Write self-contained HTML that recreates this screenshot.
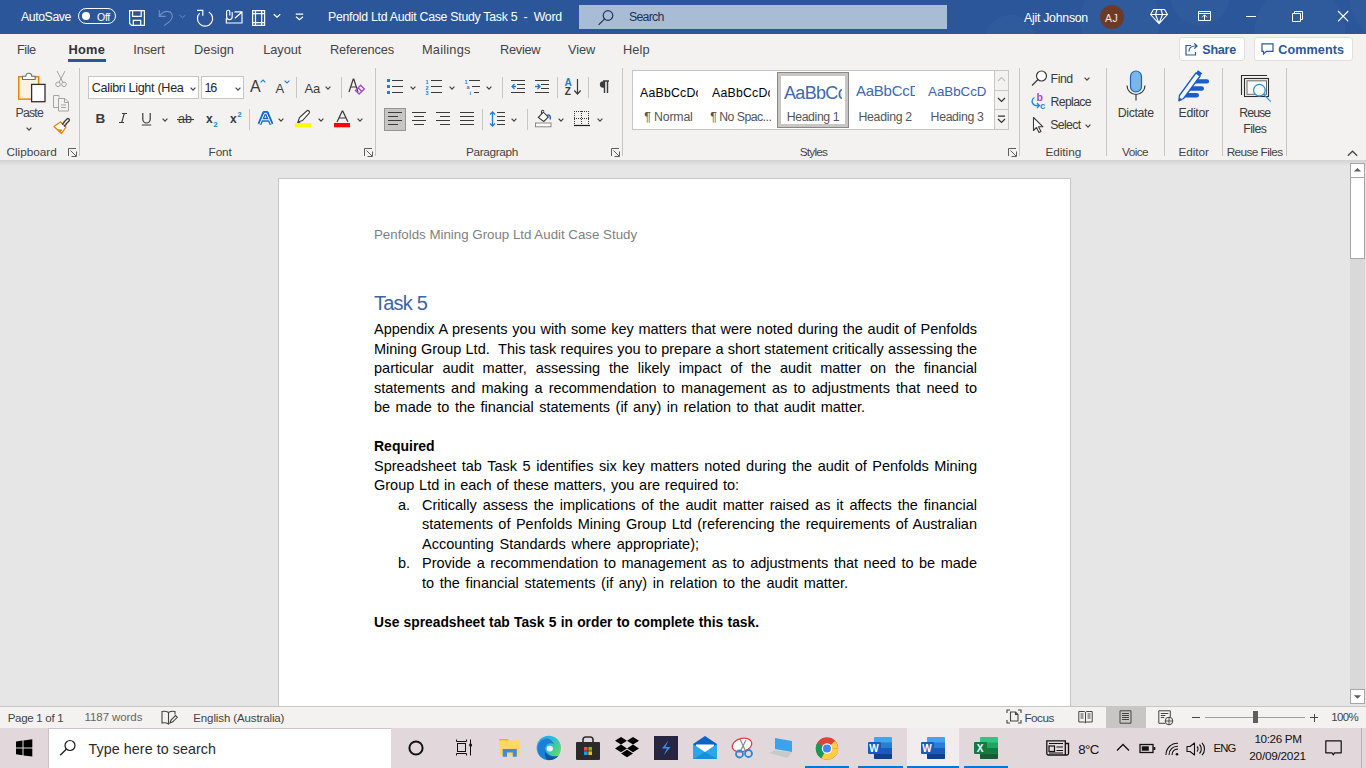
<!DOCTYPE html>
<html><head><meta charset="utf-8">
<style>
*{margin:0;padding:0;box-sizing:border-box}
html,body{width:1366px;height:768px;overflow:hidden;background:#e6e6e6;font-family:"Liberation Sans",sans-serif;position:relative}
.a{position:absolute}
.t{position:absolute;white-space:nowrap}
.ln{position:absolute;height:20px;line-height:20px;font-size:14.5px;color:#000;text-align:justify;white-space:normal}
svg{overflow:visible}
</style></head><body>
<div class="a" style="left:0px;top:0px;width:1366px;height:34px;background:#2b579a;overflow:hidden"></div>
<div class="a" style="left:1080px;top:-20px;width:80px;height:80px;border-radius:50%;background:rgba(255,255,255,0.022);clip-path:inset(20px 0 26px 0)"></div>
<div class="a" style="left:1170px;top:-35px;width:60px;height:60px;border-radius:50%;background:rgba(255,255,255,0.022);clip-path:inset(35px 0 0px 0)"></div>
<div class="a" style="left:1255px;top:-15px;width:90px;height:90px;border-radius:50%;background:rgba(255,255,255,0.022);clip-path:inset(15px 0 41px 0)"></div>
<div class="a" style="left:1350px;top:-40px;width:80px;height:80px;border-radius:50%;background:rgba(255,255,255,0.022);clip-path:inset(40px 0 6px 0)"></div>
<div class="a" style="left:985px;top:15px;width:50px;height:50px;border-radius:50%;background:rgba(255,255,255,0.022);clip-path:inset(0px 0 31px 0)"></div>
<div class="a" style="left:0px;top:34px;width:1366px;height:30px;background:#f3f2f1"></div>
<div class="a" style="left:0px;top:64px;width:1366px;height:96px;background:#f3f2f1"></div>
<div class="a" style="left:0px;top:160px;width:1366px;height:6px;background:linear-gradient(#d2d2d2,#e6e6e6)"></div>
<div class="t" style="left:21.00px;top:11.29px;font-size:12.30px;line-height:12.30px;color:#ffffff;letter-spacing:-0.420px">AutoSave</div>
<div class="a" style="left:78px;top:8px;width:38px;height:16px;border:1.3px solid #fff;border-radius:8px"></div>
<div class="a" style="left:82px;top:12px;width:8px;height:8px;border-radius:50%;background:#fff"></div>
<div class="t" style="left:97.00px;top:11.51px;font-size:10.50px;line-height:10.50px;color:#ffffff;letter-spacing:-0.276px">Off</div>
<svg class="a" style="left:129px;top:10px" width="16" height="16" viewBox="0 0 16 16"><path d="M.6 .6H15.4V15.4H2.6L.6 13.4Z M3.6 .6V6.3H12.2V.6 M4.3 15.4V10.3H11.7V15.4" fill="none" stroke="#fff" stroke-width="1.2"/></svg>
<svg class="a" style="left:158px;top:9px" width="17" height="18" viewBox="0 0 17 18"><path d="M1.3 1.1V7.4H7.8 M1.8 6.9C5 1.5 12 .8 14 5.5 15.3 8.5 12.5 12.5 6 16.6" fill="none" stroke="#6f90c2" stroke-width="1.1"/></svg>
<svg class="a" style="left:179px;top:14px" width="7" height="5" viewBox="0 0 7 5"><path d="M.7 1.2l2.8 2.5 2.8-2.5" fill="none" stroke="#6f90c2" stroke-width="1"/></svg>
<svg class="a" style="left:195px;top:9px" width="19" height="18" viewBox="0 0 19 18"><path d="M13.8 2.9A7.6 7.6 0 1 1 4.6 4.2 M2 1.4H7.8V6.7" fill="none" stroke="#fff" stroke-width="1.2"/></svg>
<svg class="a" style="left:225px;top:9px" width="18" height="15" viewBox="0 0 18 15"><path d="M1.3 9.5V14H17V2.9H9.5 M9.8 9.3 16.5 3.5 M4.8 6.5V2.8a1.6 1.6 0 0 0-3.2 0V7.8a2.8 2.8 0 0 0 5.6 0V3" fill="none" stroke="#fff" stroke-width="1.15"/></svg>
<svg class="a" style="left:251px;top:9px" width="15" height="18" viewBox="0 0 15 18"><path d="M1.6 1.6H13.6V16.4H1.6Z M4.5 1.6V16.4 M10.7 1.6V16.4 M1.6 4.6H13.6 M1.6 13.6H13.6" fill="none" stroke="#fff" stroke-width="1.2"/></svg>
<svg class="a" style="left:273px;top:13px" width="8" height="6" viewBox="0 0 8 6"><path d="M.8 1.2l3.2 3 3.2-3" fill="none" stroke="#fff" stroke-width="1.3"/></svg>
<svg class="a" style="left:295px;top:13px" width="9" height="8" viewBox="0 0 9 8"><path d="M.8 1.2h7.4 M1 3.8l3.5 3 3.5-3" fill="none" stroke="#fff" stroke-width="1.2"/></svg>
<div class="t" style="left:328.00px;top:11.49px;font-size:12.30px;line-height:12.30px;color:#ffffff;letter-spacing:-0.269px">Penfold Ltd Audit Case Study Task 5&nbsp; -&nbsp; Word</div>
<div class="a" style="left:579px;top:5px;width:368px;height:24px;background:#a9bcd5"></div>
<svg class="a" style="left:597px;top:9px" width="18" height="17" viewBox="0 0 18 17"><circle cx="11" cy="6.5" r="4.8" fill="none" stroke="#22355e" stroke-width="1.2"/><path d="M7.6 9.9 1.6 15.9" stroke="#22355e" stroke-width="1.3"/></svg>
<div class="t" style="left:629.00px;top:11.09px;font-size:12.30px;line-height:12.30px;color:#1d3158;letter-spacing:-0.747px">Search</div>
<div class="t" style="left:1024.00px;top:11.89px;font-size:12.30px;line-height:12.30px;color:#ffffff;letter-spacing:-0.254px">Ajit Johnson</div>
<div class="a" style="left:1100px;top:5px;width:24px;height:24px;border-radius:50%;background:#6d3a28"></div>
<div class="t" style="left:1105.00px;top:12.91px;font-size:10.50px;line-height:10.50px;color:#f3e6e0;letter-spacing:0.375px">AJ</div>
<svg class="a" style="left:1148px;top:6px" width="22" height="20" viewBox="1148 6 22 20"><path d="M1153.5 9.5H1164.5L1167.5 14.5 1159 23.7 1150.5 14.5Z M1150.5 14.5H1167.5 M1157 9.5 1155.5 14.5 1159 23.5 1162.5 14.5 1161 9.5" fill="none" stroke="#fff" stroke-width="1.1" stroke-linejoin="round"/></svg>
<svg class="a" style="left:1196px;top:8px" width="18" height="16" viewBox="1196 8 18 16"><path d="M1198.5 11.5H1210.5V20.5H1198.5Z M1198.5 13.5H1210.5 M1204.5 15V20.5 M1202 17.3 1204.5 14.8 1207 17.3" fill="none" stroke="#fff" stroke-width="1"/></svg>
<div class="a" style="left:1246px;top:16px;width:10px;height:1px;background:#fff"></div>
<svg class="a" style="left:1290px;top:10px" width="14" height="13" viewBox="1290 10 14 13"><path d="M1292.5 13.5H1300.5V21.5H1292.5Z M1294.5 13.5V11.5H1302.5V19.5H1300.5" fill="none" stroke="#fff" stroke-width="1"/></svg>
<svg class="a" style="left:1336px;top:10px" width="14" height="13" viewBox="1336 10 14 13"><path d="M1338 11 1348.3 21.3 M1348.3 11 1338 21.3" fill="none" stroke="#fff" stroke-width="1.1"/></svg>
<div class="t" style="left:17.00px;top:44.36px;font-size:12.80px;line-height:12.80px;color:#444444;letter-spacing:-0.502px">File</div>
<div class="t" style="left:68.40px;top:44.36px;font-size:12.80px;line-height:12.80px;color:#333;font-weight:bold;letter-spacing:0.267px">Home</div>
<div class="t" style="left:133.20px;top:44.36px;font-size:12.80px;line-height:12.80px;color:#444444;letter-spacing:-0.069px">Insert</div>
<div class="t" style="left:194.00px;top:44.36px;font-size:12.80px;line-height:12.80px;color:#444444;letter-spacing:0.031px">Design</div>
<div class="t" style="left:263.30px;top:44.36px;font-size:12.80px;line-height:12.80px;color:#444444;letter-spacing:-0.101px">Layout</div>
<div class="t" style="left:330.00px;top:44.36px;font-size:12.80px;line-height:12.80px;color:#444444;letter-spacing:-0.152px">References</div>
<div class="t" style="left:422.00px;top:44.36px;font-size:12.80px;line-height:12.80px;color:#444444;letter-spacing:0.210px">Mailings</div>
<div class="t" style="left:500.00px;top:44.36px;font-size:12.80px;line-height:12.80px;color:#444444;letter-spacing:-0.273px">Review</div>
<div class="t" style="left:568.00px;top:44.36px;font-size:12.80px;line-height:12.80px;color:#444444;letter-spacing:-0.121px">View</div>
<div class="t" style="left:623.00px;top:44.36px;font-size:12.80px;line-height:12.80px;color:#444444;letter-spacing:0.126px">Help</div>
<div class="a" style="left:68px;top:59px;width:38px;height:2.5px;background:#2b579a"></div>
<div class="a" style="left:1179px;top:37px;width:66px;height:24px;background:#fff;border:1px solid #e1dfdd;border-radius:3px"></div>
<svg class="a" style="left:1185px;top:42px" width="13" height="14" viewBox="0 0 13 14"><path d="M6 3.5H1v9.5h9.5v-3 M4 9.5c0-3.5 2.5-5.5 6-5.5h1.5 M9.3 1.5l2.8 2.5-2.8 2.6" fill="none" stroke="#2b579a" stroke-width="1.2"/></svg>
<div class="t" style="left:1202.30px;top:43.93px;font-size:12.60px;line-height:12.60px;color:#2b579a;font-weight:bold;letter-spacing:-0.260px">Share</div>
<div class="a" style="left:1254px;top:37px;width:99px;height:24px;background:#fff;border:1px solid #e1dfdd;border-radius:3px"></div>
<svg class="a" style="left:1261px;top:43px" width="13" height="12" viewBox="0 0 13 12"><path d="M1 .8h11v7.5H5.5L2.5 11V8.3H1z" fill="none" stroke="#2b579a" stroke-width="1.2"/></svg>
<div class="t" style="left:1278.30px;top:43.93px;font-size:12.60px;line-height:12.60px;color:#2b579a;font-weight:bold;letter-spacing:0.080px">Comments</div>
<div class="t" style="left:6.50px;top:146.61px;font-size:11.80px;line-height:11.80px;color:#444444;letter-spacing:-0.033px">Clipboard</div>
<svg class="a" style="left:68px;top:148px" width="9" height="9" viewBox="0 0 9 9"><path d="M.5 8V.5h7.5 M2.5 2.5l5.5 5.5 M8.5 3.5v5h-5" fill="none" stroke="#605e5c" stroke-width="1"/></svg>
<div class="a" style="left:79px;top:68px;width:1px;height:88px;background:#c8c6c4"></div>
<div class="t" style="left:208.60px;top:146.61px;font-size:11.80px;line-height:11.80px;color:#444444;letter-spacing:-0.152px">Font</div>
<svg class="a" style="left:364px;top:148px" width="9" height="9" viewBox="0 0 9 9"><path d="M.5 8V.5h7.5 M2.5 2.5l5.5 5.5 M8.5 3.5v5h-5" fill="none" stroke="#605e5c" stroke-width="1"/></svg>
<div class="a" style="left:375px;top:68px;width:1px;height:88px;background:#c8c6c4"></div>
<div class="t" style="left:466.00px;top:146.61px;font-size:11.80px;line-height:11.80px;color:#444444;letter-spacing:-0.344px">Paragraph</div>
<svg class="a" style="left:611px;top:148px" width="9" height="9" viewBox="0 0 9 9"><path d="M.5 8V.5h7.5 M2.5 2.5l5.5 5.5 M8.5 3.5v5h-5" fill="none" stroke="#605e5c" stroke-width="1"/></svg>
<div class="a" style="left:622px;top:68px;width:1px;height:88px;background:#c8c6c4"></div>
<div class="t" style="left:799.70px;top:146.61px;font-size:11.80px;line-height:11.80px;color:#444444;letter-spacing:-0.759px">Styles</div>
<svg class="a" style="left:1008px;top:148px" width="9" height="9" viewBox="0 0 9 9"><path d="M.5 8V.5h7.5 M2.5 2.5l5.5 5.5 M8.5 3.5v5h-5" fill="none" stroke="#605e5c" stroke-width="1"/></svg>
<div class="a" style="left:1019px;top:68px;width:1px;height:88px;background:#c8c6c4"></div>
<div class="t" style="left:1045.40px;top:146.61px;font-size:11.80px;line-height:11.80px;color:#444444;letter-spacing:-0.042px">Editing</div>
<div class="a" style="left:1106px;top:68px;width:1px;height:88px;background:#c8c6c4"></div>
<div class="t" style="left:1122.00px;top:146.61px;font-size:11.80px;line-height:11.80px;color:#444444;letter-spacing:-0.575px">Voice</div>
<div class="a" style="left:1164px;top:68px;width:1px;height:88px;background:#c8c6c4"></div>
<div class="t" style="left:1178.50px;top:146.51px;font-size:11.80px;line-height:11.80px;color:#444444;letter-spacing:-0.088px">Editor</div>
<div class="a" style="left:1222px;top:68px;width:1px;height:88px;background:#c8c6c4"></div>
<div class="t" style="left:1226.70px;top:146.51px;font-size:11.80px;line-height:11.80px;color:#444444;letter-spacing:-0.592px">Reuse Files</div>
<div class="a" style="left:1286px;top:68px;width:1px;height:88px;background:#c8c6c4"></div>
<svg class="a" style="left:1347px;top:150px" width="11" height="7" viewBox="0 0 11 7"><path d="M.8 5.8 5.5 1.2l4.7 4.6" fill="none" stroke="#444" stroke-width="1.2"/></svg>
<svg class="a" style="left:17px;top:71px" width="30" height="32" viewBox="0 0 30 32"><rect x="1.7" y="5.7" width="20" height="22.5" fill="#fbe7c6" stroke="#e8830c" stroke-width="1.4"/><rect x="3.5" y="7.5" width="16.5" height="19" fill="#fdf3e3"/><path d="M5.5 8.5V5.3h3.3a3 3 0 0 1 6 0h3.3v3.2z" fill="#fff" stroke="#6e6e6e" stroke-width="1.1"/><rect x="14.6" y="13.4" width="13.4" height="17.3" fill="#fff" stroke="#2f2f2f" stroke-width="1.3"/></svg>
<div class="t" style="left:15.60px;top:107.09px;font-size:12.30px;line-height:12.30px;color:#444444;letter-spacing:-0.814px">Paste</div>
<svg class="a" style="left:25.5px;top:126.5px" width="6" height="4" viewBox="0 0 6 4"><path d="M.6 .6l2.40 2.6 2.40-2.6" fill="none" stroke="#444" stroke-width="1.2"/></svg>
<svg class="a" style="left:55px;top:70px" width="12" height="18" viewBox="0 0 12 18"><path d="M2 1l6 11.5 M10 1 4 12.5" stroke="#a3a3a3" stroke-width="1" fill="none"/><circle cx="3" cy="14.3" r="2.3" fill="none" stroke="#a3a3a3" stroke-width="1"/><circle cx="9" cy="14.3" r="2.3" fill="none" stroke="#a3a3a3" stroke-width="1"/></svg>
<svg class="a" style="left:52px;top:94px" width="18" height="18" viewBox="0 0 18 18"><path d="M7 3.5V1.5H1.5v12h4.5" fill="none" stroke="#a3a3a3" stroke-width="1"/><path d="M6.5 4.5h6.5l3.5 3.5v9H6.5z M12.5 4.5v4h4 M9 11h5 M9 13.5h5" fill="none" stroke="#a3a3a3" stroke-width="1"/></svg>
<svg class="a" style="left:53px;top:117px" width="17" height="18" viewBox="0 0 17 18"><path d="M1 9.5l7.5 7 4.5-6.5-5.5-5z" fill="#fff" stroke="#e8830c" stroke-width="1.3" stroke-linejoin="round"/><path d="M3.5 12l4 3.5 2-2.8" fill="#e8830c"/><path d="M9 7.5l2.5-2.5 M11 9.5l2.5-2.5 M10.5 5.5 14 2a1.4 1.4 0 0 1 2 2l-3.5 3.5" fill="none" stroke="#3c3c3c" stroke-width="1.3"/></svg>
<div class="a" style="left:88px;top:76px;width:111px;height:23px;background:#fff;border:1px solid #c8c6c4"></div>
<div class="t" style="left:91.70px;top:82.13px;font-size:12.60px;line-height:12.60px;color:#262626;letter-spacing:-0.303px">Calibri Light (Hea</div>
<svg class="a" style="left:190px;top:87px" width="6" height="4" viewBox="0 0 6 4"><path d="M.6 .6l2.40 2.6 2.40-2.6" fill="none" stroke="#444" stroke-width="1.2"/></svg>
<div class="a" style="left:201px;top:76px;width:43px;height:23px;background:#fff;border:1px solid #c8c6c4"></div>
<div class="t" style="left:204.60px;top:82.13px;font-size:12.60px;line-height:12.60px;color:#262626;letter-spacing:-1.300px">16</div>
<svg class="a" style="left:235px;top:87px" width="6" height="4" viewBox="0 0 6 4"><path d="M.6 .6l2.40 2.6 2.40-2.6" fill="none" stroke="#444" stroke-width="1.2"/></svg>
<div class="t" style="left:250.00px;top:79.26px;font-size:16.00px;line-height:16.00px;color:#3b3b3b">A</div>
<svg class="a" style="left:260px;top:79px" width="6" height="4" viewBox="0 0 6 4"><path d="M.6 3.4 3 1l2.4 2.4" fill="none" stroke="#1f7ed3" stroke-width="1.1"/></svg>
<div class="t" style="left:275.50px;top:81.80px;font-size:13.00px;line-height:13.00px;color:#3b3b3b">A</div>
<svg class="a" style="left:284px;top:80px" width="6" height="4" viewBox="0 0 6 4"><path d="M.6.6 3 3l2.4-2.4" fill="none" stroke="#1f7ed3" stroke-width="1.1"/></svg>
<div class="a" style="left:296px;top:77px;width:1px;height:21px;background:#c8c6c4"></div>
<div class="t" style="left:304.50px;top:81.80px;font-size:13.00px;line-height:13.00px;color:#3b3b3b;letter-spacing:-0.203px">Aa</div>
<svg class="a" style="left:325px;top:86px" width="6" height="4" viewBox="0 0 6 4"><path d="M.6 .6l2.40 2.6 2.40-2.6" fill="none" stroke="#444" stroke-width="1.2"/></svg>
<div class="a" style="left:341px;top:77px;width:1px;height:21px;background:#c8c6c4"></div>
<svg class="a" style="left:348px;top:78px" width="19" height="18" viewBox="0 0 19 18"><path d="M1 14 5.2 1.2h.6L10 14 M2.7 9h6" fill="none" stroke="#3b3b3b" stroke-width="1.2"/><path d="M7.5 12.5l5.2-5.2 3.6 3.6-5.2 5.2z M10.2 9.8l3.6 3.6" fill="none" stroke="#a24fc4" stroke-width="1.4"/></svg>
<div class="t" style="left:95.50px;top:112.17px;font-size:13.50px;line-height:13.50px;color:#3b3b3b;font-weight:bold">B</div>
<svg class="a" style="left:118px;top:110px" width="10" height="16" viewBox="118 110 10 16"><path d="M122 113.5H127 M119 122.5H124 M124.3 113.5 121.7 122.5" stroke="#3b3b3b" stroke-width="1.1" fill="none"/></svg>
<svg class="a" style="left:141px;top:112px" width="11" height="14" viewBox="0 0 11 14"><path d="M1.8 1v6.3a3.7 3.7 0 0 0 7.4 0V1 M.8 13h9.4" fill="none" stroke="#3b3b3b" stroke-width="1.2"/></svg>
<svg class="a" style="left:161.5px;top:117.5px" width="6" height="4" viewBox="0 0 6 4"><path d="M.6 .6l2.40 2.6 2.40-2.6" fill="none" stroke="#444" stroke-width="1.2"/></svg>
<svg class="a" style="left:177px;top:112px" width="18" height="14" viewBox="0 0 18 14"><text x="1" y="11" font-family="Liberation Sans" font-size="12.5" fill="#3b3b3b">ab</text><path d="M0 7.5h17" stroke="#3b3b3b" stroke-width="1.1"/></svg>
<svg class="a" style="left:206px;top:112px" width="12" height="15" viewBox="0 0 12 15"><text x="0" y="11" font-family="Liberation Sans" font-size="12" font-weight="bold" fill="#3b3b3b">x</text><text x="7.5" y="14.5" font-family="Liberation Sans" font-size="7.5" font-weight="bold" fill="#1f7ed3">2</text></svg>
<svg class="a" style="left:230px;top:110px" width="13" height="14" viewBox="0 0 13 14"><text x="0" y="13" font-family="Liberation Sans" font-size="12" font-weight="bold" fill="#3b3b3b">x</text><text x="7.5" y="6.5" font-family="Liberation Sans" font-size="7.5" font-weight="bold" fill="#1f7ed3">2</text></svg>
<div class="a" style="left:249px;top:109px;width:1px;height:21px;background:#c8c6c4"></div>
<svg class="a" style="left:255px;top:109px" width="20" height="19" viewBox="255 109 20 19"><path d="M259.5 124.2 264.2 113h2.6l4.7 11.2 M261.8 119.8h7.4" fill="none" stroke="#1068c8" stroke-width="4" stroke-linejoin="round"/><path d="M259.8 124 264.5 113.3h2l4.7 10.7 M262 119.8h7" fill="none" stroke="#fff" stroke-width="1"/></svg>
<svg class="a" style="left:277.5px;top:117.5px" width="6" height="4" viewBox="0 0 6 4"><path d="M.6 .6l2.40 2.6 2.40-2.6" fill="none" stroke="#444" stroke-width="1.2"/></svg>
<svg class="a" style="left:295px;top:110px" width="17" height="18" viewBox="0 0 17 18"><path d="M3 12l1.5-4.5 7.2-6.5a1.6 1.6 0 0 1 2.3 2.3L7.5 10.5z" fill="#fff" stroke="#3b3b3b" stroke-width="1.1"/><path d="M3 12l-1.5 1.5h3l1-1.2" fill="#3b3b3b"/><rect x="0" y="13" width="16" height="4.3" fill="#ffff00"/></svg>
<svg class="a" style="left:318px;top:117.5px" width="6" height="4" viewBox="0 0 6 4"><path d="M.6 .6l2.40 2.6 2.40-2.6" fill="none" stroke="#444" stroke-width="1.2"/></svg>
<svg class="a" style="left:334px;top:110px" width="17" height="18" viewBox="0 0 17 18"><path d="M3 12 8.2 1.2h.6L14 12 M5 8h7" fill="none" stroke="#3b3b3b" stroke-width="1.2"/><rect x="0" y="13" width="16" height="4.3" fill="#ff0000"/></svg>
<svg class="a" style="left:356.5px;top:117.5px" width="6" height="4" viewBox="0 0 6 4"><path d="M.6 .6l2.40 2.6 2.40-2.6" fill="none" stroke="#444" stroke-width="1.2"/></svg>
<svg class="a" style="left:384px;top:76px" width="22" height="21" viewBox="384 76 22 21"><rect x="387" y="79" width="3" height="3" fill="#1f7ed3"/><path d="M392 80.5H403" stroke="#3b3b3b" stroke-width="1"/><rect x="387" y="85" width="3" height="3" fill="#1f7ed3"/><path d="M392 86.5H403" stroke="#3b3b3b" stroke-width="1"/><rect x="387" y="91" width="3" height="3" fill="#1f7ed3"/><path d="M392 92.5H403" stroke="#3b3b3b" stroke-width="1"/></svg>
<svg class="a" style="left:409.5px;top:86px" width="6" height="4" viewBox="0 0 6 4"><path d="M.6 .6l2.40 2.6 2.40-2.6" fill="none" stroke="#444" stroke-width="1.2"/></svg>
<svg class="a" style="left:422px;top:76px" width="24" height="21" viewBox="422 76 24 21"><path d="M431 80.5H442" stroke="#3b3b3b" stroke-width="1"/><path d="M431 86.5H442" stroke="#3b3b3b" stroke-width="1"/><path d="M431 92.5H442" stroke="#3b3b3b" stroke-width="1"/><text x="425.5" y="83.5" font-family="Liberation Sans" font-size="5.5" font-weight="bold" fill="#1f7ed3">1</text><text x="425.5" y="89.5" font-family="Liberation Sans" font-size="5.5" font-weight="bold" fill="#1f7ed3">2</text><text x="425.5" y="95.3" font-family="Liberation Sans" font-size="5.5" font-weight="bold" fill="#1f7ed3">3</text></svg>
<svg class="a" style="left:448.5px;top:86px" width="6" height="4" viewBox="0 0 6 4"><path d="M.6 .6l2.40 2.6 2.40-2.6" fill="none" stroke="#444" stroke-width="1.2"/></svg>
<svg class="a" style="left:462px;top:76px" width="22" height="21" viewBox="462 76 22 21"><path d="M469 80.5H480" stroke="#3b3b3b" stroke-width="1"/><path d="M472 86.5H480" stroke="#3b3b3b" stroke-width="1"/><path d="M474 92.5H479" stroke="#3b3b3b" stroke-width="1"/><text x="464.5" y="83.5" font-family="Liberation Sans" font-size="5.5" font-weight="bold" fill="#1f7ed3">1</text><text x="466.5" y="89.3" font-family="Liberation Sans" font-size="5.5" font-weight="bold" fill="#1f7ed3">a</text><text x="469.5" y="95.3" font-family="Liberation Sans" font-size="5.5" font-weight="bold" fill="#1f7ed3">i</text></svg>
<svg class="a" style="left:485.7px;top:86px" width="6" height="4" viewBox="0 0 6 4"><path d="M.6 .6l2.40 2.6 2.40-2.6" fill="none" stroke="#444" stroke-width="1.2"/></svg>
<div class="a" style="left:502px;top:77px;width:1px;height:21px;background:#c8c6c4"></div>
<svg class="a" style="left:508px;top:76px" width="20" height="20" viewBox="508 76 20 20"><path d="M511 80.5H525" stroke="#3b3b3b" stroke-width="1"/><path d="M517 84.5H525" stroke="#3b3b3b" stroke-width="1"/><path d="M517 88.5H525" stroke="#3b3b3b" stroke-width="1"/><path d="M511 92.5H525" stroke="#3b3b3b" stroke-width="1"/><path d="M516 86.5H512 M514.5 84 512 86.5 514.5 89" fill="none" stroke="#1f7ed3" stroke-width="1.3"/></svg>
<svg class="a" style="left:532px;top:76px" width="20" height="20" viewBox="532 76 20 20"><path d="M535 80.5H549" stroke="#3b3b3b" stroke-width="1"/><path d="M541 84.5H549" stroke="#3b3b3b" stroke-width="1"/><path d="M541 88.5H549" stroke="#3b3b3b" stroke-width="1"/><path d="M535 92.5H549" stroke="#3b3b3b" stroke-width="1"/><path d="M535 86.5H540 M537.5 84 540 86.5 537.5 89" fill="none" stroke="#1f7ed3" stroke-width="1.3"/></svg>
<div class="a" style="left:557px;top:77px;width:1px;height:21px;background:#c8c6c4"></div>
<svg class="a" style="left:562px;top:76px" width="22" height="21" viewBox="562 76 22 21"><text x="564.6" y="85.8" font-family="Liberation Sans" font-size="10.2" font-weight="bold" fill="#1f7ed3">A</text><text x="564.7" y="94.9" font-family="Liberation Sans" font-size="10" font-weight="bold" fill="#3b3b3b">Z</text><path d="M577.5 79v15 M574.3 90.5l3.2 3.5 3.2-3.5" fill="none" stroke="#3b3b3b" stroke-width="1.2"/></svg>
<div class="a" style="left:588px;top:77px;width:1px;height:21px;background:#c8c6c4"></div>
<svg class="a" style="left:596px;top:78px" width="16" height="18" viewBox="596 78 16 18"><path d="M604.5 81V93 M607.5 81V93 M603 81H609" stroke="#3b3b3b" stroke-width="1.4"/><path d="M604.5 81.2h-1.3a3.3 3.3 0 0 0 0 6.6h1.3z" fill="#3b3b3b"/></svg>
<div class="a" style="left:384px;top:108px;width:22px;height:23px;background:#c8c6c4;border:1px solid #979593"></div>
<svg class="a" style="left:388px;top:108px" width="16" height="22" viewBox="388 108 16 22"><path d="M388 112.5H402" stroke="#3b3b3b" stroke-width="1"/><path d="M388 116.5H398" stroke="#3b3b3b" stroke-width="1"/><path d="M388 120.5H402" stroke="#3b3b3b" stroke-width="1"/><path d="M388 124.5H398" stroke="#3b3b3b" stroke-width="1"/></svg>
<svg class="a" style="left:412px;top:108px" width="16" height="22" viewBox="412 108 16 22"><path d="M412 112.5H426" stroke="#3b3b3b" stroke-width="1"/><path d="M414 116.5H424" stroke="#3b3b3b" stroke-width="1"/><path d="M412 120.5H426" stroke="#3b3b3b" stroke-width="1"/><path d="M414 124.5H424" stroke="#3b3b3b" stroke-width="1"/></svg>
<svg class="a" style="left:436px;top:108px" width="16" height="22" viewBox="436 108 16 22"><path d="M436 112.5H450" stroke="#3b3b3b" stroke-width="1"/><path d="M440 116.5H450" stroke="#3b3b3b" stroke-width="1"/><path d="M436 120.5H450" stroke="#3b3b3b" stroke-width="1"/><path d="M440 124.5H450" stroke="#3b3b3b" stroke-width="1"/></svg>
<svg class="a" style="left:460px;top:108px" width="16" height="22" viewBox="460 108 16 22"><path d="M460 112.5H474" stroke="#3b3b3b" stroke-width="1"/><path d="M460 116.5H474" stroke="#3b3b3b" stroke-width="1"/><path d="M460 120.5H474" stroke="#3b3b3b" stroke-width="1"/><path d="M460 124.5H474" stroke="#3b3b3b" stroke-width="1"/></svg>
<div class="a" style="left:482px;top:109px;width:1px;height:21px;background:#c8c6c4"></div>
<svg class="a" style="left:486px;top:108px" width="22" height="22" viewBox="486 108 22 22"><path d="M492.5 112V126 M490 114.5 492.5 112 495 114.5 M490 123.5 492.5 126 495 123.5" fill="none" stroke="#1f7ed3" stroke-width="1.3"/><path d="M497 112.5H505" stroke="#3b3b3b" stroke-width="1"/><path d="M497 116.5H505" stroke="#3b3b3b" stroke-width="1"/><path d="M497 120.5H505" stroke="#3b3b3b" stroke-width="1"/><path d="M497 124.5H505" stroke="#3b3b3b" stroke-width="1"/></svg>
<svg class="a" style="left:510.5px;top:117.5px" width="6" height="4" viewBox="0 0 6 4"><path d="M.6 .6l2.40 2.6 2.40-2.6" fill="none" stroke="#444" stroke-width="1.2"/></svg>
<div class="a" style="left:527px;top:109px;width:1px;height:21px;background:#c8c6c4"></div>
<svg class="a" style="left:535px;top:110px" width="17" height="18" viewBox="0 0 17 18"><path d="M3.3 7.5l5-5.3 5 4.8-4.5 4.5z" fill="#fff" stroke="#3b3b3b" stroke-width="1.1"/><path d="M6.5 4V1.5a1.2 1.2 0 0 1 2.4 0" fill="none" stroke="#3b3b3b" stroke-width="1.1"/><path d="M12 5.5c1.5-1 3-.5 3.3 1.5v2.5" fill="none" stroke="#1f5fa8" stroke-width="1.4"/><rect x=".5" y="13" width="15.5" height="3.8" fill="#fff" stroke="#8a8886" stroke-width="1"/></svg>
<svg class="a" style="left:557.5px;top:117.5px" width="6" height="4" viewBox="0 0 6 4"><path d="M.6 .6l2.40 2.6 2.40-2.6" fill="none" stroke="#444" stroke-width="1.2"/></svg>
<svg class="a" style="left:572px;top:109px" width="20" height="19" viewBox="572 109 20 19"><path d="M574 111.5H589" stroke="#3b3b3b" stroke-width="1" stroke-dasharray="1 1"/><path d="M574 118.5H589" stroke="#3b3b3b" stroke-width="1" stroke-dasharray="1 1"/><path d="M574.5 111V125" stroke="#3b3b3b" stroke-width="1" stroke-dasharray="1 1"/><path d="M581.5 111V125" stroke="#3b3b3b" stroke-width="1" stroke-dasharray="1 1"/><path d="M588.5 111V125" stroke="#3b3b3b" stroke-width="1" stroke-dasharray="1 1"/><path d="M574 125.5H590" stroke="#1b1b1b" stroke-width="1.2"/></svg>
<svg class="a" style="left:596.5px;top:117.5px" width="6" height="4" viewBox="0 0 6 4"><path d="M.6 .6l2.40 2.6 2.40-2.6" fill="none" stroke="#444" stroke-width="1.2"/></svg>
<div class="a" style="left:632px;top:70px;width:363px;height:60px;background:#fff;border:1px solid #c8c6c4"></div>
<div class="a" style="left:640px;top:80px;width:58px;height:22px;overflow:hidden">
<div class="t" style="left:0.00px;top:6.89px;font-size:12.30px;line-height:12.30px;color:#000;letter-spacing:0.230px">AaBbCcDc</div>
</div>
<div class="t" style="left:644.30px;top:111.29px;font-size:12.30px;line-height:12.30px;color:#555;letter-spacing:-0.159px">&para; Normal</div>
<div class="a" style="left:712px;top:80px;width:58px;height:22px;overflow:hidden">
<div class="t" style="left:0.00px;top:6.89px;font-size:12.30px;line-height:12.30px;color:#000;letter-spacing:0.230px">AaBbCcDc</div>
</div>
<div class="t" style="left:710.30px;top:111.29px;font-size:12.30px;line-height:12.30px;color:#555;letter-spacing:-0.540px">&para; No Spac...</div>
<div class="a" style="left:777px;top:72px;width:72px;height:56px;background:#fff;border:1px solid #8a8886;box-shadow:inset 0 0 0 3px #c8c6c4"></div>
<div class="a" style="left:784px;top:78px;width:58px;height:26px;overflow:hidden">
<div class="t" style="left:0.00px;top:6.46px;font-size:18.00px;line-height:18.00px;color:#4069b0;letter-spacing:-0.672px">AaBbCc</div>
</div>
<div class="t" style="left:786.70px;top:111.29px;font-size:12.30px;line-height:12.30px;color:#555;letter-spacing:-0.388px">Heading 1</div>
<div class="a" style="left:856px;top:80px;width:58.5px;height:22px;overflow:hidden">
<div class="t" style="left:0.00px;top:3.30px;font-size:15.00px;line-height:15.00px;color:#4069b0;letter-spacing:-0.263px">AaBbCcD</div>
</div>
<div class="t" style="left:858.50px;top:111.29px;font-size:12.30px;line-height:12.30px;color:#555;letter-spacing:-0.299px">Heading 2</div>
<div class="a" style="left:928px;top:80px;width:59px;height:22px;overflow:hidden">
<div class="t" style="left:0.00px;top:4.84px;font-size:13.30px;line-height:13.30px;color:#3a62aa;letter-spacing:0.013px">AaBbCcD</div>
</div>
<div class="t" style="left:930.60px;top:111.29px;font-size:12.30px;line-height:12.30px;color:#555;letter-spacing:-0.344px">Heading 3</div>
<div class="a" style="left:994px;top:70px;width:15px;height:21px;background:#f3f2f1;border:1px solid #c8c6c4"></div>
<svg class="a" style="left:997px;top:76px" width="9" height="6" viewBox="0 0 9 6"><path d="M1 5 4.5 1.5 8 5" fill="none" stroke="#c0c0c0" stroke-width="1.1"/></svg>
<div class="a" style="left:994px;top:90px;width:15px;height:20px;background:#f3f2f1;border:1px solid #c8c6c4"></div>
<svg class="a" style="left:997px;top:97px" width="9" height="6" viewBox="0 0 9 6"><path d="M1 1l3.5 3.5L8 1" fill="none" stroke="#333" stroke-width="1.2"/></svg>
<div class="a" style="left:994px;top:109px;width:15px;height:21px;background:#f3f2f1;border:1px solid #c8c6c4"></div>
<svg class="a" style="left:997px;top:115px" width="9" height="9" viewBox="0 0 9 9"><path d="M1 1.2h7 M1 4l3.5 3.5L8 4" fill="none" stroke="#333" stroke-width="1.2"/></svg>
<svg class="a" style="left:1031px;top:70px" width="17" height="17" viewBox="0 0 17 17"><circle cx="10.5" cy="6" r="5" fill="#fff" stroke="#3b3b3b" stroke-width="1.2"/><path d="M7 9.5 1 15.5" stroke="#3b3b3b" stroke-width="1.3"/></svg>
<div class="t" style="left:1050.60px;top:73.29px;font-size:12.30px;line-height:12.30px;color:#3b3b3b;letter-spacing:-0.434px">Find</div>
<svg class="a" style="left:1084px;top:77px" width="6" height="4" viewBox="0 0 6 4"><path d="M.6 .6l2.40 2.6 2.40-2.6" fill="none" stroke="#444" stroke-width="1.2"/></svg>
<svg class="a" style="left:1028px;top:90px" width="20" height="22" viewBox="1028 90 20 22"><text x="1036.6" y="100.6" font-family="Liberation Sans" font-size="10.5" font-weight="bold" fill="#b146c2">b</text><text x="1040" y="108.8" font-family="Liberation Sans" font-size="9.5" font-weight="bold" fill="#1f8ad8">c</text><path d="M1034.5 97.5C1031.5 99 1030.8 103.5 1035 105.5H1039.5 M1037 103 1039.5 105.5 1037 108" fill="none" stroke="#1f8ad8" stroke-width="1.3"/></svg>
<div class="t" style="left:1050.60px;top:96.39px;font-size:12.30px;line-height:12.30px;color:#3b3b3b;letter-spacing:-0.677px">Replace</div>
<svg class="a" style="left:1032px;top:116px" width="13" height="17" viewBox="0 0 13 17"><path d="M1.5 1.5v13l3-3 2.5 5 2-1-2.5-4.8h4.3z" fill="#fff" stroke="#3b3b3b" stroke-width="1.1" stroke-linejoin="round"/></svg>
<div class="t" style="left:1050.20px;top:119.29px;font-size:12.30px;line-height:12.30px;color:#3b3b3b;letter-spacing:-0.634px">Select</div>
<svg class="a" style="left:1084.5px;top:124px" width="6" height="4" viewBox="0 0 6 4"><path d="M.6 .6l2.40 2.6 2.40-2.6" fill="none" stroke="#444" stroke-width="1.2"/></svg>
<svg class="a" style="left:1126px;top:70px" width="20" height="32" viewBox="0 0 20 32"><rect x="4.5" y="1" width="11" height="21" rx="5.5" fill="#7ab6ea" stroke="#1a64b5" stroke-width="1.2"/><path d="M1 15.5a9 9 0 0 0 18 0 M10 24.5v6" fill="none" stroke="#3b3b3b" stroke-width="1.2"/></svg>
<div class="t" style="left:1117.70px;top:107.19px;font-size:12.30px;line-height:12.30px;color:#3b3b3b;letter-spacing:-0.328px">Dictate</div>
<svg class="a" style="left:1176px;top:68px" width="36" height="36" viewBox="1176 68 36 36"><path d="M1196 79.3H1207a2.1 2.1 0 0 1 0 4.2H1193z M1191 86.2H1201.7a2.3 2.3 0 0 1 0 4.6H1188z M1186 93H1196.7a2.3 2.3 0 0 1 0 4.6H1183z" fill="#1a5dc9"/><path d="M1195.9 73L1200.1 76 1183.6 98.5 1178.9 100.8 1179.4 95.5z" fill="#f8f8f8" stroke="#1a5dc9" stroke-width="1.3" stroke-linejoin="round"/><path d="M1195.9 73 1198 70.2 1202.2 73.2 1200.1 76z M1178.6 101.2 1179.2 97.5 1182 99.3z" fill="#1a5dc9"/></svg>
<div class="t" style="left:1178.50px;top:107.39px;font-size:12.30px;line-height:12.30px;color:#3b3b3b;letter-spacing:-0.307px">Editor</div>
<svg class="a" style="left:1238px;top:72px" width="36" height="32" viewBox="1238 72 36 32"><path d="M1241.5 95V75.5H1267" fill="none" stroke="#2b2b2b" stroke-width="1.1"/><rect x="1244.5" y="78.5" width="24" height="18" fill="none" stroke="#2b2b2b" stroke-width="1.1"/><rect x="1247" y="80.8" width="19.5" height="13.5" fill="#f8f8f8" stroke="#6a6a6a" stroke-width="1"/><circle cx="1259.4" cy="90.2" r="5.8" fill="#f8f8f8" stroke="#2f95d8" stroke-width="1.3"/><path d="M1263.6 94.4 1270.8 101.6" stroke="#2f95d8" stroke-width="1.3"/></svg>
<div class="t" style="left:1239.30px;top:107.39px;font-size:12.30px;line-height:12.30px;color:#3b3b3b;letter-spacing:-0.933px">Reuse</div>
<div class="t" style="left:1243.30px;top:123.19px;font-size:12.30px;line-height:12.30px;color:#3b3b3b;letter-spacing:-0.617px">Files</div>
<div class="a" style="left:278px;top:178px;width:793px;height:540px;background:#fff;border:1px solid #c6c6c6;border-bottom:none"></div>
<div class="t" style="left:374.00px;top:228.14px;font-size:13.30px;line-height:13.30px;color:#7f7f7f;letter-spacing:-0.001px">Penfolds Mining Group Ltd Audit Case Study</div>
<div class="t" style="left:374.00px;top:293.47px;font-size:20.00px;line-height:20.00px;color:#3c63a8;letter-spacing:-0.802px">Task 5</div>
<div class="ln" style="left:374px;top:319.40px;width:603px;text-align-last:justify">Appendix A presents you with some key matters that were noted during the audit of Penfolds</div>
<div class="ln" style="left:374px;top:338.85px;width:603px;text-align-last:justify">Mining Group Ltd.&nbsp; This task requires you to prepare a short statement critically assessing the</div>
<div class="ln" style="left:374px;top:358.30px;width:603px;text-align-last:justify">particular audit matter, assessing the likely impact of the audit matter on the financial</div>
<div class="ln" style="left:374px;top:377.75px;width:603px;text-align-last:justify">statements and making a recommendation to management as to adjustments that need to</div>
<div class="ln" style="left:374px;top:397.20px;width:491px;text-align-last:justify">be made to the financial statements (if any) in relation to that audit matter.</div>
<div class="ln" style="left:374px;top:436.10px;width:61px;text-align-last:justify;font-weight:bold;font-size:14px">Required</div>
<div class="ln" style="left:374px;top:455.55px;width:603px;text-align-last:justify">Spreadsheet tab Task 5 identifies six key matters noted during the audit of Penfolds Mining</div>
<div class="ln" style="left:374px;top:475.00px;width:365px;text-align-last:justify">Group Ltd in each of these matters, you are required to:</div>
<div class="ln" style="left:398px;top:494.95px;width:20px;text-align-last:left">a.</div>
<div class="ln" style="left:422px;top:494.95px;width:555px;text-align-last:justify">Critically assess the implications of the audit matter raised as it affects the financial</div>
<div class="ln" style="left:422px;top:514.40px;width:555px;text-align-last:justify">statements of Penfolds Mining Group Ltd (referencing the requirements of Australian</div>
<div class="ln" style="left:422px;top:533.85px;width:277px;text-align-last:justify">Accounting Standards where appropriate);</div>
<div class="ln" style="left:398px;top:553.30px;width:20px;text-align-last:left">b.</div>
<div class="ln" style="left:422px;top:553.30px;width:555px;text-align-last:justify">Provide a recommendation to management as to adjustments that need to be made</div>
<div class="ln" style="left:422px;top:573.25px;width:426px;text-align-last:justify">to the financial statements (if any) in relation to the audit matter.</div>
<div class="ln" style="left:374px;top:613.15px;width:385px;text-align-last:justify;font-weight:bold;font-size:13.8px">Use spreadsheet tab Task 5 in order to complete this task.</div>
<div class="a" style="left:1350px;top:259px;width:15px;height:431px;background:#d9d9d9"></div>
<div class="a" style="left:1350px;top:163px;width:15px;height:15px;background:#fff;border:1px solid #a6a6a6"></div>
<svg class="a" style="left:1353px;top:167px" width="9" height="6" viewBox="0 0 9 6"><path d="M.8 4.5 4.5 1 8.2 4.5z" fill="#606060"/></svg>
<div class="a" style="left:1350px;top:177px;width:15px;height:82px;background:#fff;border:1px solid #a6a6a6"></div>
<div class="a" style="left:1350px;top:689px;width:15px;height:15px;background:#fff;border:1px solid #a6a6a6"></div>
<svg class="a" style="left:1353px;top:694px" width="9" height="6" viewBox="0 0 9 6"><path d="M.8 1.2 4.5 4.8 8.2 1.2z" fill="#606060"/></svg>
<div class="a" style="left:0px;top:706px;width:1366px;height:1px;background:#c8c6c4"></div>
<div class="a" style="left:0px;top:707px;width:1366px;height:21px;background:#f3f2f1"></div>
<div class="t" style="left:7.70px;top:713.07px;font-size:11.50px;line-height:11.50px;color:#444;letter-spacing:-0.288px">Page 1 of 1</div>
<div class="t" style="left:84.60px;top:712.17px;font-size:11.50px;line-height:11.50px;color:#666;letter-spacing:-0.086px">1187 words</div>
<svg class="a" style="left:161px;top:710px" width="16" height="15" viewBox="0 0 16 15"><path d="M7.5 2.5C6 1.5 3 1 1 1.5v11.5c2-.5 5 0 6.5 1V2.5c1.5-1 4.5-1.5 6.5-1v3" fill="none" stroke="#444" stroke-width="1.1"/><path d="M9 13l1-3 4.5-4.5 1.8 1.8-4.5 4.5z" fill="none" stroke="#444" stroke-width="1.1"/></svg>
<div class="t" style="left:193.30px;top:713.07px;font-size:11.50px;line-height:11.50px;color:#444;letter-spacing:-0.121px">English (Australia)</div>
<svg class="a" style="left:1006px;top:709px" width="16" height="15" viewBox="0 0 16 15"><path d="M1 4V1h3 M12 1h3v3 M15 11v3h-3 M4 14H1v-3" fill="none" stroke="#444" stroke-width="1.1"/><path d="M4.5 3h5l2.5 2.5V12h-7.5z M9.5 3v2.5H12" fill="none" stroke="#444" stroke-width="1.1"/></svg>
<div class="t" style="left:1024.40px;top:712.81px;font-size:11.80px;line-height:11.80px;color:#444;letter-spacing:-0.528px">Focus</div>
<svg class="a" style="left:1078px;top:710px" width="15" height="13" viewBox="0 0 15 13"><path d="M.8 1.5h5.5l1.2.8 1.2-.8h5.5v10.5H8.7l-1.2.8-1.2-.8H.8z M7.5 2.3v10.5 M2.5 4h3 M2.5 6h3 M2.5 8h3 M9.5 4h3 M9.5 6h3 M9.5 8h3" fill="none" stroke="#444" stroke-width="1"/></svg>
<div class="a" style="left:1106px;top:707px;width:40px;height:21px;background:#c8c6c4"></div>
<svg class="a" style="left:1119px;top:710px" width="13" height="14" viewBox="0 0 13 14"><path d="M1 .8h11v12.4H1z M3 3.5h7 M3 5.5h7 M3 7.5h7 M3 9.5h7" fill="none" stroke="#444" stroke-width="1"/></svg>
<svg class="a" style="left:1158px;top:710px" width="16" height="15" viewBox="0 0 16 15"><path d="M.8 .8h11.5v7 M.8 .8v12.5h6.5 M2.8 3.5h7.5 M2.8 5.5h4.5 M2.8 7.5h3.5" fill="none" stroke="#444" stroke-width="1"/><circle cx="11" cy="11" r="3.8" fill="#f3f2f1" stroke="#444" stroke-width="1"/><path d="M7.2 11h7.6 M11 7.2v7.6" stroke="#444" stroke-width=".9"/></svg>
<div class="a" style="left:1192px;top:717px;width:8px;height:1px;background:#444"></div>
<div class="a" style="left:1205px;top:717px;width:100px;height:1px;background:#a19f9d"></div>
<div class="a" style="left:1253px;top:711px;width:5px;height:12px;background:#605e5c"></div>
<div class="a" style="left:1310px;top:717px;width:8px;height:1px;background:#444"></div>
<div class="a" style="left:1313.5px;top:713.5px;width:1px;height:8px;background:#444"></div>
<div class="t" style="left:1331.30px;top:712.07px;font-size:11.50px;line-height:11.50px;color:#444;letter-spacing:-0.673px">100%</div>
<div class="a" style="left:0px;top:728px;width:1366px;height:40px;background:#e2d8dc"></div>
<svg class="a" style="left:14px;top:738px" width="20" height="20" viewBox="14 738 20 20"><path d="M16 741.5 22.5 740.6V747.4H16z M23.5 740.5 32.3 739.3V747.4H23.5z M16 748.4H22.5V755.2L16 754.3z M23.5 748.4H32.3V756.6L23.5 755.4z" fill="#000"/></svg>
<div class="a" style="left:48px;top:728px;width:343px;height:40px;background:#fff;border-left:1px solid #c9c2c5;border-top:1px solid #cdc6c9"></div>
<svg class="a" style="left:59px;top:739px" width="18" height="18" viewBox="0 0 18 18"><circle cx="11" cy="6.5" r="5" fill="none" stroke="#1a1a1a" stroke-width="1.2"/><path d="M7.5 10 1.2 16.3" stroke="#1a1a1a" stroke-width="1.3"/></svg>
<div class="t" style="left:88.60px;top:742.20px;font-size:14.30px;line-height:14.30px;color:#2a2a2a;letter-spacing:0.052px">Type here to search</div>
<svg class="a" style="left:408px;top:740px" width="16" height="16" viewBox="0 0 16 16"><circle cx="8" cy="8" r="6.6" fill="none" stroke="#111" stroke-width="2"/></svg>
<svg class="a" style="left:454px;top:738px" width="20" height="20" viewBox="454 738 20 20"><path d="M456.5 739.5V741.5H466.5V739.5 M456.5 755.5V753.5H466.5V755.5 M470.5 739.5V755.5" fill="none" stroke="#111" stroke-width="1"/><rect x="457.5" y="743.5" width="8" height="8" fill="none" stroke="#111" stroke-width="1"/><rect x="469.3" y="743.8" width="2.6" height="2.6" fill="#111"/></svg>
<svg class="a" style="left:498px;top:738px" width="24" height="20" viewBox="498 738 24 20"><path d="M499.2 739.3H507.5L509 740.5V742H499.2z" fill="#e0a510"/><rect x="499.2" y="740.3" width="21" height="15.5" fill="#ffd766"/><path d="M502.7 756.7V749H516.8V756.7H512.8V752.4H507V756.7z" fill="#3a8ee0"/></svg>
<svg class="a" style="left:535px;top:735px" width="28" height="27" viewBox="535 735 28 27"><defs><linearGradient id="eg1" x1="0" y1="0" x2="1" y2=".7"><stop offset="0" stop-color="#2a9fe6"/><stop offset=".5" stop-color="#2dbbd8"/><stop offset="1" stop-color="#62dd5c"/></linearGradient><clipPath id="ec"><circle cx="548.8" cy="748" r="12.2"/></clipPath></defs><circle cx="548.8" cy="748" r="12.2" fill="url(#eg1)"/><g clip-path="url(#ec)"><path d="M546 738.5C540 740 537.5 744 537.5 749 537.5 755.5 543 760.2 549 760.2 553 760.2 557 758.5 559.5 755.5 555 757 549 756 546.5 752 544.5 749 545 745.5 548 744 550 743 552.5 743.2 554.5 744.5 552 740 549 738.5 546 738.5z" fill="#1b7fd8"/><path d="M545.5 751.5C547 756.5 553 758 559.5 755.5 556.5 759.5 552 760.5 548 760 545 758 544.5 754 545.5 751.5z" fill="#0f55a5"/></g><ellipse cx="549.8" cy="748.6" rx="3.2" ry="2.9" fill="#f4f0f2"/></svg>
<svg class="a" style="left:576px;top:736px" width="24" height="24" viewBox="0 0 24 24"><path d="M7 6V3.5a2.5 2.5 0 0 1 2.5-2.5h5A2.5 2.5 0 0 1 17 3.5V6" fill="none" stroke="#2b2b2b" stroke-width="1.6"/><rect x="0" y="6" width="24" height="18" rx="1" fill="#2b2b2b"/><rect x="8" y="11" width="3.6" height="3.6" fill="#f25022"/><rect x="12.4" y="11" width="3.6" height="3.6" fill="#7fba00"/><rect x="8" y="15.4" width="3.6" height="3.6" fill="#00a4ef"/><rect x="12.4" y="15.4" width="3.6" height="3.6" fill="#ffb900"/></svg>
<svg class="a" style="left:615px;top:737px" width="24" height="21" viewBox="0 0 24 21"><path d="M6 0 0 3.8 6 7.6 12 3.8z M18 0 12 3.8 18 7.6 24 3.8z M0 11.4 6 15.2 12 11.4 6 7.6z M24 11.4 18 15.2 12 11.4 18 7.6z M6 16.5 12 20.3 18 16.5 12 12.7z" fill="#000"/></svg>
<svg class="a" style="left:654px;top:736px" width="24" height="24" viewBox="0 0 24 24"><rect width="24" height="24" fill="#272640"/><path d="M14.5 4.5 8 12.5h5l-3.5 7 7-8.5h-5z" fill="#3a8ef0"/></svg>
<svg class="a" style="left:693px;top:736px" width="24" height="23" viewBox="0 0 24 23"><path d="M0 8 12 0l12 8v15H0z" fill="#0a64c8"/><path d="M3 8.5h18v7L12 20 3 15.5z" fill="#fff"/><path d="M0 8l12 8 12-8v15H0z" fill="#28a8ea"/><path d="M0 23l12-7 12 7z" fill="#1490df"/></svg>
<svg class="a" style="left:731px;top:737px" width="24" height="22" viewBox="0 0 24 22"><ellipse cx="11" cy="8" rx="10" ry="6.5" fill="#fff" stroke="#e04040" stroke-width="1.3" transform="rotate(-15 11 8)"/><path d="M9 2l5 11 M15 3l-5 10" stroke="#888" stroke-width="1.2"/><circle cx="8.5" cy="17" r="3.5" fill="none" stroke="#2a86d9" stroke-width="1.8"/><circle cx="17.5" cy="16.5" r="3.5" fill="none" stroke="#2a86d9" stroke-width="1.8"/></svg>
<svg class="a" style="left:769px;top:738px" width="24" height="20" viewBox="0 0 24 20"><path d="M6 0 23 3v11L6 11z" fill="#3aa3ec"/><path d="M0 15l6-3 17 2.5L18 20z" fill="#c9c9c9"/></svg>
<svg class="a" style="left:815px;top:737px" width="24" height="23" viewBox="0 0 24 23"><circle cx="12" cy="11.5" r="11.2" fill="#db4437"/><path d="M12 11.5 2.3 5.9A11.2 11.2 0 0 0 6.4 21.2z" fill="#0f9d58"/><path d="M12 11.5l-5.6 9.7A11.2 11.2 0 0 0 23.2 11.5z" fill="#ffcd40"/><path d="M12 11.5h11.2A11.2 11.2 0 0 0 20 4z" fill="#ffcd40"/><circle cx="12" cy="11.5" r="5.2" fill="#fff"/><circle cx="12" cy="11.5" r="4" fill="#4285f4"/></svg>
<div class="a" style="left:805px;top:766px;width:44px;height:2px;background:#0078d7"></div>
<div class="a" style="left:907px;top:728px;width:52px;height:40px;background:#f1ecee"></div>
<svg class="a" style="left:868px;top:737px" width="24" height="22" viewBox="0 0 24 22"><rect x="6" y="0" width="18" height="22" rx="1" fill="#41a5ee"/><rect x="6" y="5.5" width="18" height="5.5" fill="#2b7cd3"/><rect x="6" y="11" width="18" height="5.5" fill="#185abd"/><path d="M6 16.5h18V21a1 1 0 0 1-1 1H7a1 1 0 0 1-1-1z" fill="#103f91"/><rect x="0" y="5" width="13" height="12" rx="1" fill="#185abd"/><text x="1.3" y="14.5" font-family="Liberation Sans" font-size="10" font-weight="bold" fill="#fff">W</text></svg>
<div class="a" style="left:858px;top:766px;width:45px;height:2px;background:#0078d7"></div>
<svg class="a" style="left:921px;top:737px" width="24" height="22" viewBox="0 0 24 22"><rect x="6" y="0" width="18" height="22" rx="1" fill="#41a5ee"/><rect x="6" y="5.5" width="18" height="5.5" fill="#2b7cd3"/><rect x="6" y="11" width="18" height="5.5" fill="#185abd"/><path d="M6 16.5h18V21a1 1 0 0 1-1 1H7a1 1 0 0 1-1-1z" fill="#103f91"/><rect x="0" y="5" width="13" height="12" rx="1" fill="#185abd"/><text x="1.3" y="14.5" font-family="Liberation Sans" font-size="10" font-weight="bold" fill="#fff">W</text></svg>
<div class="a" style="left:907px;top:766px;width:52px;height:2px;background:#0078d7"></div>
<svg class="a" style="left:974px;top:737px" width="25" height="22" viewBox="0 0 25 22"><rect x="6" y="0" width="18" height="22" rx="1" fill="#33c481"/><rect x="6" y="5.5" width="18" height="5.5" fill="#21a366"/><rect x="6" y="11" width="18" height="5.5" fill="#107c41"/><path d="M6 16.5h18V21a1 1 0 0 1-1 1H7a1 1 0 0 1-1-1z" fill="#185c37"/><rect x="0" y="5" width="13" height="12" rx="1" fill="#107c41"/><text x="2.8" y="14.6" font-family="Liberation Sans" font-size="10" font-weight="bold" fill="#fff">X</text></svg>
<div class="a" style="left:964px;top:766px;width:44px;height:2px;background:#0078d7"></div>
<svg class="a" style="left:1046px;top:740px" width="24" height="16" viewBox="0 0 24 16"><path d="M.8 .8h18.5V15H2.3A1.5 1.5 0 0 1 .8 13.5z M19.3 3.5h3.2V13.5A1.5 1.5 0 0 1 21 15H18" fill="none" stroke="#111" stroke-width="1.3"/><rect x="3" y="6" width="5.5" height="5.5" fill="none" stroke="#111" stroke-width="1.2"/><path d="M3 3.5h14 M10.5 7h6.5 M10.5 10.5h6.5 M3 13h14" stroke="#111" stroke-width="1.1"/></svg>
<div class="t" style="left:1078.30px;top:742.94px;font-size:13.30px;line-height:13.30px;color:#111;letter-spacing:-0.638px">8&deg;C</div>
<svg class="a" style="left:1116px;top:743px" width="14" height="9" viewBox="0 0 14 9"><path d="M1 7.5 7 1.5l6 6" fill="none" stroke="#111" stroke-width="1.3"/></svg>
<svg class="a" style="left:1139px;top:743px" width="17" height="11" viewBox="0 0 17 11"><rect x="1" y="1.5" width="13" height="8" fill="none" stroke="#111" stroke-width="1.3"/><rect x="2.8" y="3.3" width="7" height="4.4" fill="#111"/><rect x="14.5" y="4" width="1.8" height="3" fill="#111"/></svg>
<svg class="a" style="left:1165px;top:742px" width="15" height="14" viewBox="0 0 15 14"><path d="M1 13A11.5 11.5 0 0 1 13 1.2 M4 13a8.5 8.5 0 0 1 9-8.8 M7 13a5.5 5.5 0 0 1 6-5.8" fill="none" stroke="#111" stroke-width="1.1"/><circle cx="12" cy="12.3" r="1.3" fill="#111"/></svg>
<svg class="a" style="left:1186px;top:742px" width="19" height="14" viewBox="0 0 19 14"><path d="M1 4.5h3l4.5-3.5v12L4 9.5H1z" fill="none" stroke="#111" stroke-width="1.1" stroke-linejoin="round"/><path d="M11 4.5a3.5 3.5 0 0 1 0 5 M13.5 2.5a6.5 6.5 0 0 1 0 9 M16 .8a9 9 0 0 1 0 12.4" fill="none" stroke="#111" stroke-width="1.1"/></svg>
<div class="t" style="left:1213.40px;top:743.13px;font-size:11.30px;line-height:11.30px;color:#111;letter-spacing:-0.756px">ENG</div>
<div class="t" style="left:1254.50px;top:732.80px;font-size:11.70px;line-height:11.70px;color:#111;letter-spacing:-0.379px">10:26 PM</div>
<div class="t" style="left:1249.30px;top:751.31px;font-size:11.80px;line-height:11.80px;color:#111;letter-spacing:-0.256px">20/09/2021</div>
<svg class="a" style="left:1325px;top:740px" width="17" height="17" viewBox="0 0 17 17"><path d="M.8 .8h15.4v12H9.5L8.2 14.8 7 12.8H.8z" fill="none" stroke="#111" stroke-width="1.2" stroke-linejoin="round"/></svg>
<div class="a" style="left:1361px;top:728px;width:1px;height:40px;background:#b9b2b5"></div>
</body></html>
